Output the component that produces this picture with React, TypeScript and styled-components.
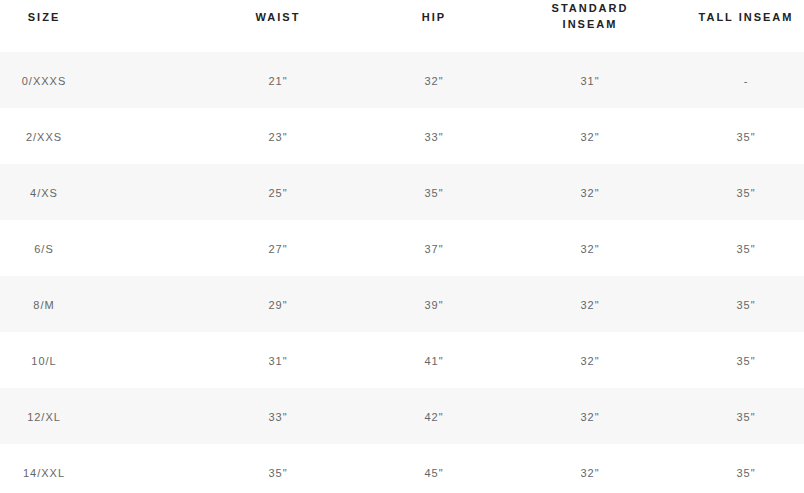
import React from 'react';
import styled, { createGlobalStyle } from 'styled-components';

const GlobalStyle = createGlobalStyle`
    html, body {
        margin: 0;
        padding: 0;
        background: #fff;
        overflow: hidden;
    }
`;

const StyledTable = styled.div`
    width: 804px;
    overflow: hidden;
    font-family: "Liberation Sans", Arial, sans-serif;
`;

const HeadRow = styled.div`
    display: flex;
    align-items: center;
    height: 32px;
    margin-bottom: 20px;
`;

const BodyRow = styled.div<{ $shaded: boolean }>`
    display: flex;
    align-items: center;
    height: 56px;
    background: ${p => (p.$shaded ? '#f7f7f7' : '#fff')};
`;

const Cell = styled.div<{ $first?: boolean }>`
    flex: 0 0 ${p => (p.$first ? '88px' : '156px')};
    margin-right: ${p => (p.$first ? '112px' : '0')};
    text-align: center;
`;

const HeadText = styled.span`
    display: inline-block;
    font-size: 11px;
    font-weight: 700;
    line-height: 16px;
    letter-spacing: 2px;
    color: #222;
    text-transform: uppercase;
`;

const ValueText = styled.span`
    font-size: 11px;
    letter-spacing: 1px;
    color: #666;
`;

interface ISizeRow {
    size: string;
    waist: string;
    hip: string;
    standard: string;
    tall: string;
}

const columns = ['Size', 'Waist', 'Hip', 'Standard Inseam', 'Tall Inseam'];

const rows: ISizeRow[] = [
    { size: '0/XXXS', waist: '21"', hip: '32"', standard: '31"', tall: '-' },
    { size: '2/XXS', waist: '23"', hip: '33"', standard: '32"', tall: '35"' },
    { size: '4/XS', waist: '25"', hip: '35"', standard: '32"', tall: '35"' },
    { size: '6/S', waist: '27"', hip: '37"', standard: '32"', tall: '35"' },
    { size: '8/M', waist: '29"', hip: '39"', standard: '32"', tall: '35"' },
    { size: '10/L', waist: '31"', hip: '41"', standard: '32"', tall: '35"' },
    { size: '12/XL', waist: '33"', hip: '42"', standard: '32"', tall: '35"' },
    { size: '14/XXL', waist: '35"', hip: '45"', standard: '32"', tall: '35"' },
];

export const App: React.FC = () => {
    return <>
        <GlobalStyle />
        <StyledTable>
            <HeadRow>
                {columns.map((c, i) => (
                    <Cell key={c} $first={i === 0}>
                        <HeadText>{c === 'Standard Inseam' ? <>Standard<br />Inseam</> : c}</HeadText>
                    </Cell>
                ))}
            </HeadRow>
            {rows.map((r, i) => (
                <BodyRow key={r.size} $shaded={i % 2 === 0}>
                    <Cell $first><ValueText>{r.size}</ValueText></Cell>
                    <Cell><ValueText>{r.waist}</ValueText></Cell>
                    <Cell><ValueText>{r.hip}</ValueText></Cell>
                    <Cell><ValueText>{r.standard}</ValueText></Cell>
                    <Cell><ValueText>{r.tall}</ValueText></Cell>
                </BodyRow>
            ))}
        </StyledTable>
    </>;
};

export default App;
